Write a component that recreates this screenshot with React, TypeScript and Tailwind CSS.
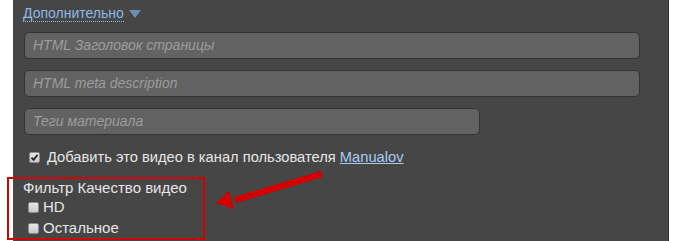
import React from 'react';

const inputs = [
  { placeholder: 'HTML Заголовок страницы', width: 'w-[616px]' },
  { placeholder: 'HTML meta description', width: 'w-[616px]' },
  { placeholder: 'Теги материала', width: 'w-[456px]' },
];

const Box: React.FC<{ checked?: boolean }> = ({ checked }) => (
  <span className="inline-flex items-center justify-center w-[11px] h-[11px] rounded-[2px] bg-gradient-to-b from-[#e8e8e8] to-[#c8c8c8] border border-[#8e8e8e]">
    {checked && (
      <svg width="9" height="9" viewBox="0 0 9 9">
        <path d="M1.5 4.6 L3.6 6.8 L7.6 1.8" fill="none" stroke="#222" strokeWidth="1.8" />
      </svg>
    )}
  </span>
);

const App: React.FC = () => {
  return (
    <div className="relative w-[680px] h-[241px] bg-white flex overflow-hidden font-['Liberation_Sans',Arial,sans-serif]">
      <div className="w-[13px] shrink-0" />
      <div className="w-[656px] h-full bg-[#464646] border-r border-[#2e2e2e] pl-[10px] pt-[5px]">
        <div className="flex items-center gap-[5px] h-[17px]">
          <span className="text-[14px] leading-[16px] text-[#8db8e8] border-b border-dotted border-[#8db8e8]">
            Дополнительно
          </span>
          <svg width="12" height="8" viewBox="0 0 12 8" className="mt-[1px]">
            <path d="M0 0 H12 L6 8 Z" fill="#6b8fb6" />
          </svg>
        </div>
        <div className="flex flex-col gap-[11px] mt-[10px] pl-[1px]">
          {inputs.map((item, i) => (
            <div
              key={i}
              className={`${item.width} h-[27px] rounded-[5px] bg-[#626262] border border-[#333] flex items-center pl-[8px] text-[14px] italic text-[#9d9d9d]`}
            >
              {item.placeholder}
            </div>
          ))}
        </div>
        <div className="flex items-center gap-[7px] mt-[13px] pl-[6px] text-[14.7px] leading-[18px] text-[#e6e6e6]">
          <Box checked />
          <span>
            Добавить это видео в канал пользователя{' '}
            <span className="text-[#a8cdf2] underline">Manualov</span>
          </span>
        </div>
        <div className="mt-[13px] text-[15px] leading-[18px] text-[#e6e6e6]">
          <div>Фильтр Качество видео</div>
          <div className="flex items-center gap-[4px] pl-[5px] mt-[1px]">
            <Box />
            <span>HD</span>
          </div>
          <div className="flex items-center gap-[4px] pl-[5px] mt-[3px]">
            <Box />
            <span>Остальное</span>
          </div>
        </div>
      </div>
      <div className="flex-1" />

      <div className="absolute left-[7px] top-[177px] w-[198px] h-[63px] border-2 border-[#d40000]" />
      <svg
        className="absolute left-0 top-0"
        width="680"
        height="241"
        viewBox="0 0 680 241"
      >
        <path d="M321 171 L323 177 L236 203 L234 197 Z" fill="#d40000" />
        <path d="M216 203 L229 191 L234 209 Z" fill="#d40000" />
      </svg>
    </div>
  );
};

export default App;
